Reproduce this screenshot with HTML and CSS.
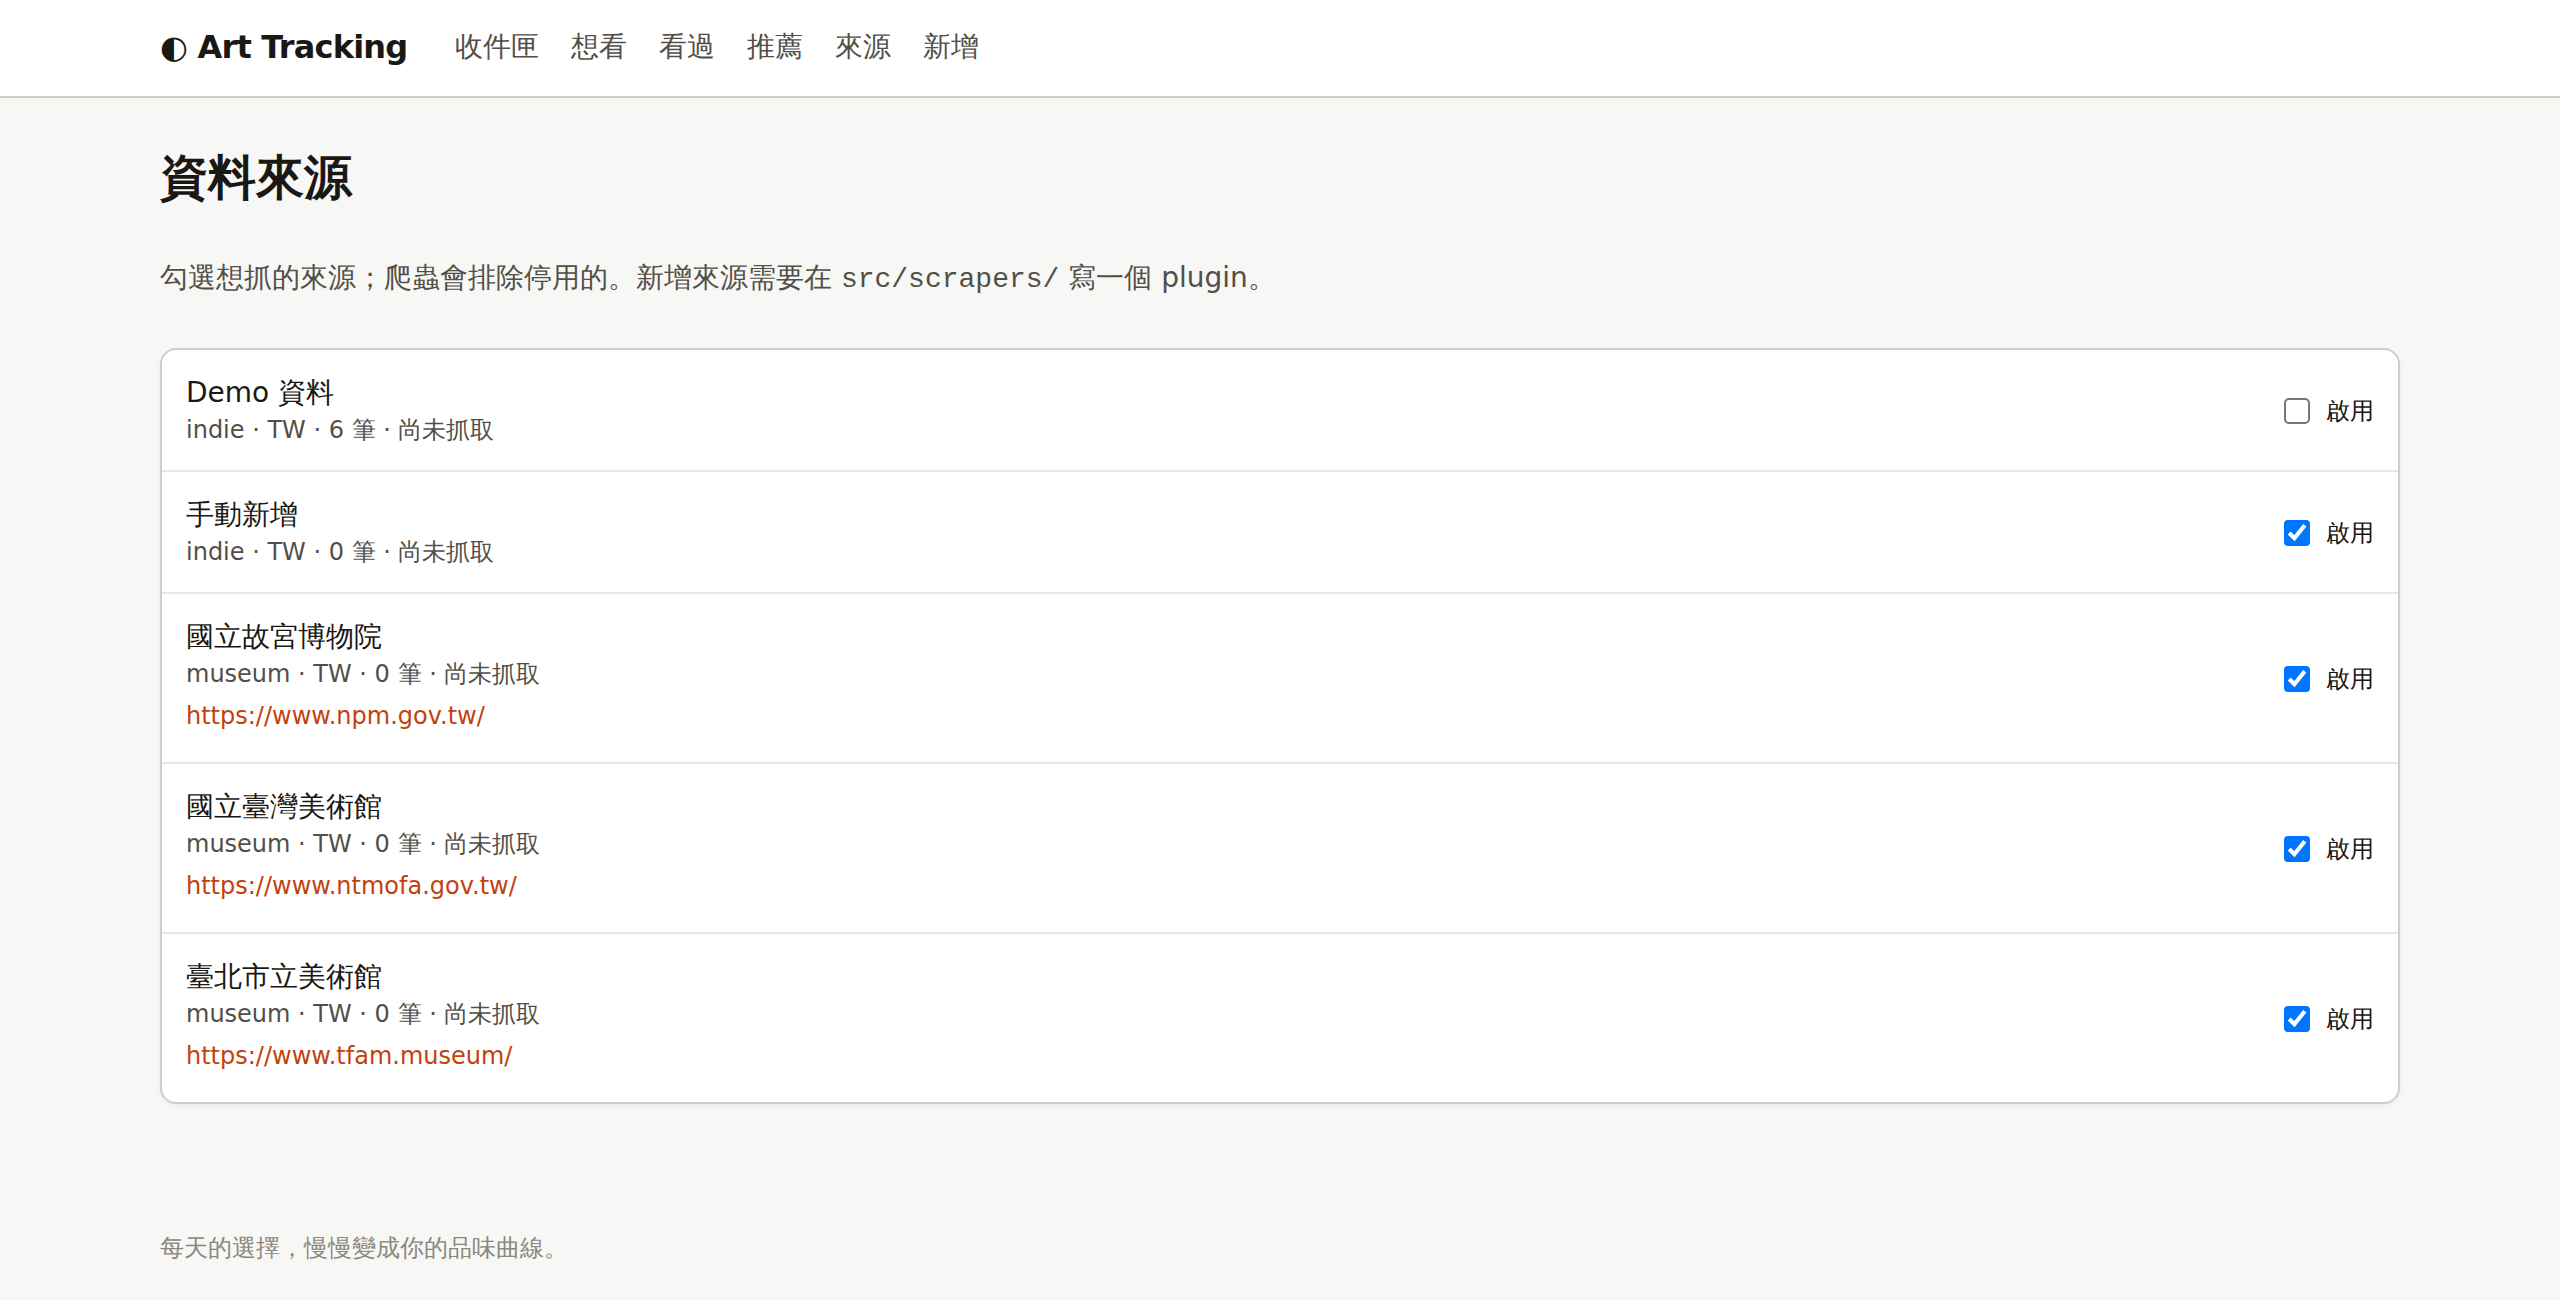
FILE: index.html
```html
<!doctype html>
<html lang="zh-Hant">
    <head>
        <meta charset="UTF-8" />
        <meta name="viewport" content="width=device-width, initial-scale=1" />
        <title>資料來源 · Art Tracking</title>
        <link rel="stylesheet" href="styles.css">
    </head>
    <body>
        <header class="topbar">
            <a class="brand" href="/">◐ Art Tracking</a>
            <nav class="nav">
                <a href="/inbox">收件匣</a>
                <a href="/wishlist">想看</a>
                <a href="/seen">看過</a>
                <a href="/recommend">推薦</a>
                <a href="/sources">來源</a>
                <a href="/new">新增</a>
            </nav>
        </header>
        <main>
            <h1>資料來源</h1>
            <p class="lead">勾選想抓的來源；爬蟲會排除停用的。新增來源需要在 <code>src/scrapers/</code> 寫一個 plugin。</p>
            <ul class="sources">
                <li class="source">
                    <div>
                        <div class="name">Demo 資料</div>
                        <div class="meta">indie · TW · 6 筆 · 尚未抓取</div>
                    </div>
                    <label class="toggle"><input type="checkbox" /> 啟用</label>
                </li>
                <li class="source">
                    <div>
                        <div class="name">手動新增</div>
                        <div class="meta">indie · TW · 0 筆 · 尚未抓取</div>
                    </div>
                    <label class="toggle"><input type="checkbox" checked /> 啟用</label>
                </li>
                <li class="source">
                    <div>
                        <div class="name">國立故宮博物院</div>
                        <div class="meta">museum · TW · 0 筆 · 尚未抓取</div>
                        <a class="url" href="https://www.npm.gov.tw/">https://www.npm.gov.tw/</a>
                    </div>
                    <label class="toggle"><input type="checkbox" checked /> 啟用</label>
                </li>
                <li class="source">
                    <div>
                        <div class="name">國立臺灣美術館</div>
                        <div class="meta">museum · TW · 0 筆 · 尚未抓取</div>
                        <a class="url" href="https://www.ntmofa.gov.tw/">https://www.ntmofa.gov.tw/</a>
                    </div>
                    <label class="toggle"><input type="checkbox" checked /> 啟用</label>
                </li>
                <li class="source">
                    <div>
                        <div class="name">臺北市立美術館</div>
                        <div class="meta">museum · TW · 0 筆 · 尚未抓取</div>
                        <a class="url" href="https://www.tfam.museum/">https://www.tfam.museum/</a>
                    </div>
                    <label class="toggle"><input type="checkbox" checked /> 啟用</label>
                </li>
            </ul>
        </main>
        <footer class="footer">每天的選擇，慢慢變成你的品味曲線。</footer>
    </body>
</html>
```
FILE: styles.css
```css
:root {
    --bg: #f7f7f5;
    --panel: #ffffff;
    --ink: #1a1814;
    --ink-soft: #524f48;
    --ink-faint: #8a867c;
    --line: #d0cdc6;
    --line-soft: #e8e7e2;
    --accent: #c2410c;
    --gutter: 160px;
}
* {
    box-sizing: border-box;
}
body {
    margin: 0;
    background: var(--bg);
    color: var(--ink);
    font-family: "DejaVu Sans", sans-serif;
    font-size: 28px;
    line-height: 44px;
}
a {
    color: inherit;
    text-decoration: none;
}

/* header */
.topbar {
    display: flex;
    align-items: center;
    gap: 48px;
    padding: 24px var(--gutter) 26px;
    background: var(--panel);
    border-bottom: 2px solid var(--line);
    line-height: 46px;
}
.brand {
    font-size: 32px;
    font-weight: 700;
    letter-spacing: -0.025em;
}
.nav {
    display: flex;
    gap: 32px;
    color: var(--ink-soft);
}

/* content */
main {
    padding: 48px var(--gutter) 0;
}
h1 {
    margin: 0 0 48px;
    font-size: 48px;
    line-height: 62px;
}
.lead {
    margin: 0 0 46px;
    color: var(--ink-soft);
}
code {
    font-family: "Liberation Mono", monospace;
    font-size: 28px;
}
.sources {
    margin: 0;
    padding: 0;
    list-style: none;
    background: var(--panel);
    border: 2px solid var(--line);
    border-radius: 16px;
    box-shadow: 0 2px 4px rgba(0, 0, 0, 0.05);
}
.source {
    display: flex;
    align-items: center;
    justify-content: space-between;
    padding: 24px 24px 22px;
}
.source + .source {
    border-top: 2px solid var(--line-soft);
}
.name {
    line-height: 38px;
}
.meta,
.url,
.toggle {
    font-size: 24px;
    line-height: 36px;
}
.meta {
    color: var(--ink-soft);
}
.url {
    display: block;
    padding: 6px 0;
    color: var(--accent);
}
.toggle {
    display: flex;
    align-items: center;
    gap: 16px;
}
.toggle input {
    width: 13px;
    height: 13px;
    margin: 0;
    zoom: 2;
}

.footer {
    padding: 120px var(--gutter) 32px;
    color: var(--ink-faint);
    font-size: 24px;
    line-height: 48px;
}
```
